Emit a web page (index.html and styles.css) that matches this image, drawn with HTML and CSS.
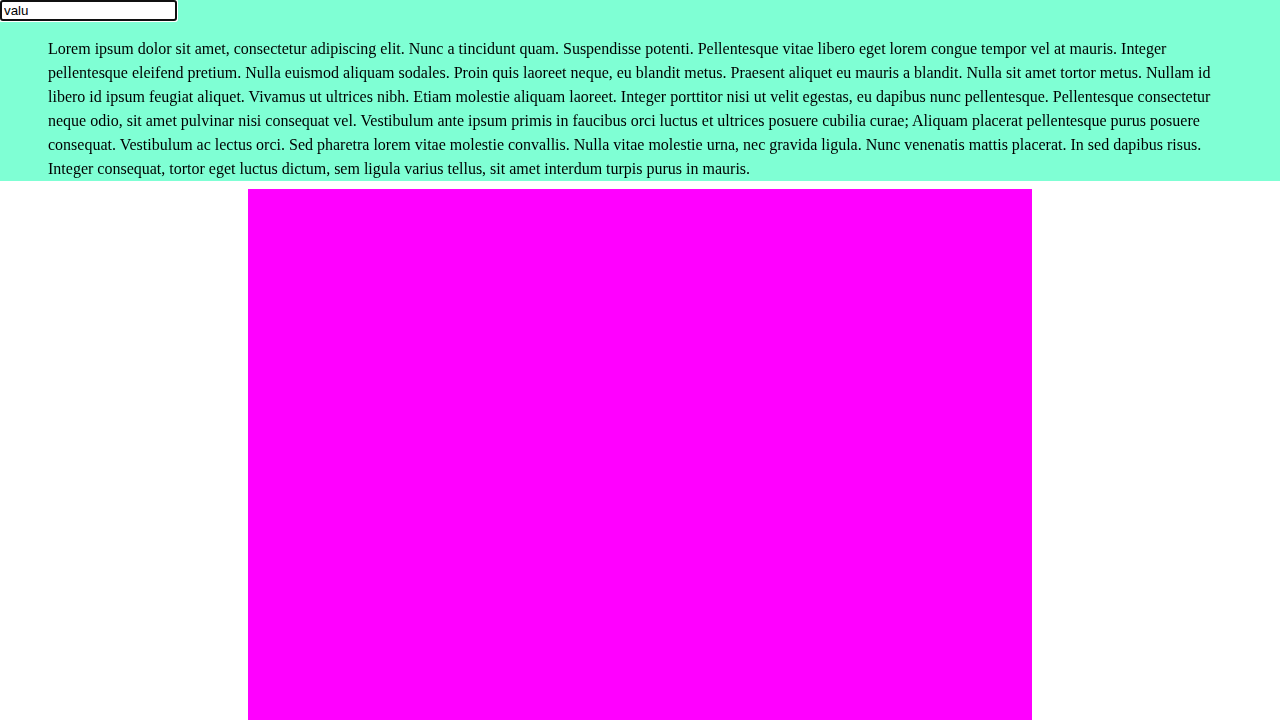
FILE: index.html
```html
<!DOCTYPE html>
<html>
<head>
<meta charset="utf-8">
<link rel="stylesheet" href="styles.css">
</head>
<body>
<div class="header">
<input class="field" type="text" value="valu" autofocus>
<p class="text">Lorem ipsum dolor sit amet, consectetur adipiscing elit. Nunc a tincidunt quam. Suspendisse potenti. Pellentesque vitae libero eget lorem congue tempor vel at mauris. Integer pellentesque eleifend pretium. Nulla euismod aliquam sodales. Proin quis laoreet neque, eu blandit metus. Praesent aliquet eu mauris a blandit. Nulla sit amet tortor metus. Nullam id libero id ipsum feugiat aliquet. Vivamus ut ultrices nibh. Etiam molestie aliquam laoreet. Integer porttitor nisi ut velit egestas, eu dapibus nunc pellentesque. Pellentesque consectetur neque odio, sit amet pulvinar nisi consequat vel. Vestibulum ante ipsum primis in faucibus orci luctus et ultrices posuere cubilia curae; Aliquam placerat pellentesque purus posuere consequat. Vestibulum ac lectus orci. Sed pharetra lorem vitae molestie convallis. Nulla vitae molestie urna, nec gravida ligula. Nunc venenatis mattis placerat. In sed dapibus risus. Integer consequat, tortor eget luctus dictum, sem ligula varius tellus, sit amet interdum turpis purus in mauris.</p>
</div>
<div class="block"></div>
</body>
</html>
```
FILE: styles.css
```css
html, body {
  margin: 0;
  padding: 0;
  background: #ffffff;
}
body {
  font-family: "Liberation Serif", "Times New Roman", serif;
  font-size: 16px;
  line-height: 24px;
}
.header {
  background: #7fffd4;
  display: flow-root;
}
.field {
  display: block;
  box-sizing: border-box;
  width: 177px;
  height: 21px;
  font-family: "Liberation Sans", Arial, sans-serif;
  font-size: 13.333px;
  margin: 0;
}
.text {
  margin: 16px 48px 0 48px;
  color: #000000;
}
.block {
  width: 784px;
  height: 531px;
  margin: 8px auto 0 auto;
  background: #ff00ff;
}
```
